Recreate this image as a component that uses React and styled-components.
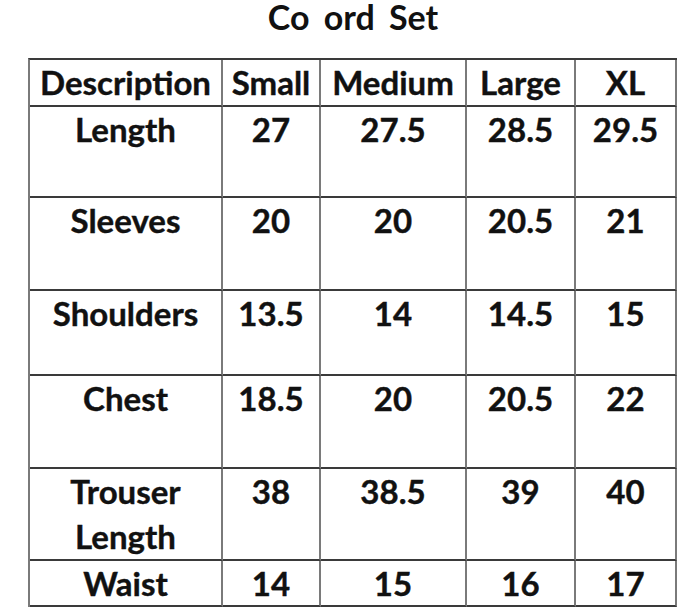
import React from "react";
import styled, { createGlobalStyle } from "styled-components";

const Global = createGlobalStyle`
  html, body { margin: 0; padding: 0; background: #fff; }
  body { font-family: Lato, "Open Sans", sans-serif; color: #111; }
`;

const Page = styled.div`
  width: 700px;
  height: 613px;
  display: flex;
  flex-direction: column;
  align-items: flex-start;
  padding-left: 28px;
  box-sizing: border-box;
  overflow: hidden;
`;

const Title = styled.h1`
  margin: 0 0 24px 0;
  width: 650px;
  text-align: center;
  font-size: 34px;
  line-height: 34px;
  font-weight: 700;
  word-spacing: 6px;
`;

const Grid = styled.div`
  display: grid;
  grid-template-columns: 193px 98px 146px 109px 101px;
  grid-template-rows: 47px 91px 93px 85px 93px 92px 46px;
  border-top: 2px solid #3a3a3a;
  border-left: 2px solid #7a7a7a;
`;

const Cell = styled.div`
  box-sizing: border-box;
  border-right: 2px solid #7a7a7a;
  border-bottom: 2px solid #3a3a3a;
  text-align: center;
  font-size: 33px;
  font-weight: 700;
  line-height: 45px;
  white-space: pre-line;
  -webkit-text-stroke: 0.4px #111;
`;

const header = ["Description", "Small", "Medium", "Large", "XL"];
const rows = [
  ["Length", "27", "27.5", "28.5", "29.5"],
  ["Sleeves", "20", "20", "20.5", "21"],
  ["Shoulders", "13.5", "14", "14.5", "15"],
  ["Chest", "18.5", "20", "20.5", "22"],
  ["Trouser\nLength", "38", "38.5", "39", "40"],
  ["Waist", "14", "15", "16", "17"],
];

export default function App() {
  return (
    <>
      <Global />
      <Page>
        <Title>Co ord Set</Title>
        <Grid>
          {header.map((h) => (
            <Cell key={h}>{h}</Cell>
          ))}
          {rows.map((r, i) =>
            r.map((c, j) => <Cell key={i + "-" + j}>{c}</Cell>)
          )}
        </Grid>
      </Page>
    </>
  );
}
